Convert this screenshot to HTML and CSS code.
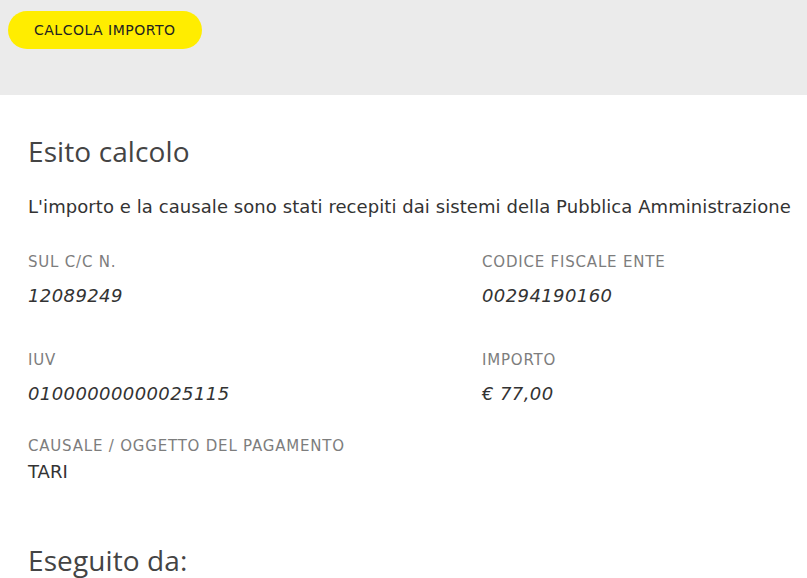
FILE: index.html
```html
<!DOCTYPE html>
<html>
  <head>
    <title>Esito calcolo</title>
    <meta name="viewport" content="width=device-width, initial-scale=1">
    <link rel="stylesheet" href="styles.css">
  </head>
  <body>
    <div class="toolbar">
      <button class="btn-yellow" type="button">CALCOLA IMPORTO</button>
    </div>
    <div class="result">
      <h2 class="title">Esito calcolo</h2>
      <p class="intro">L'importo e la causale sono stati recepiti dai sistemi della Pubblica Amministrazione</p>
      <div class="fields">
        <div class="field">
          <div class="label">SUL C/C N.</div>
          <div class="value">12089249</div>
        </div>
        <div class="field">
          <div class="label">CODICE FISCALE ENTE</div>
          <div class="value">00294190160</div>
        </div>
        <div class="field">
          <div class="label">IUV</div>
          <div class="value">01000000000025115</div>
        </div>
        <div class="field">
          <div class="label">IMPORTO</div>
          <div class="value">€ 77,00</div>
        </div>
      </div>
      <div class="field causale">
        <div class="label">CAUSALE / OGGETTO DEL PAGAMENTO</div>
        <div class="plain">TARI</div>
      </div>
      <h2 class="title next">Eseguito da:</h2>
    </div>
  </body>
</html>
```

FILE: styles.css
```css
body {
  margin: 0;
  font-family: "DejaVu Sans", sans-serif;
  color: #333;
  background: #fff;
  overflow: hidden;
}
.toolbar {
  height: 95px;
  background: #ebebeb;
  padding: 11px 8px 0;
  box-sizing: border-box;
}
.btn-yellow {
  height: 38px;
  padding: 0 26px;
  border: none;
  border-radius: 19px;
  background: #ffed00;
  color: #222;
  font-family: "DejaVu Sans", sans-serif;
  font-size: 14px;
  letter-spacing: 0.5px;
}
.result {
  padding: 38px 28px 0;
}
.title {
  margin: 0;
  font-family: "Open Sans", sans-serif;
  font-weight: 400;
  font-size: 28px;
  color: #444;
  line-height: 36px;
  letter-spacing: 0.1px;
}
.intro {
  margin: 26px 0 0;
  font-size: 18px;
  line-height: 24px;
  letter-spacing: 0.07px;
  white-space: nowrap;
}
.fields {
  display: grid;
  grid-template-columns: 454px 1fr;
  row-gap: 41px;
  margin-top: 33px;
}
.label {
  font-size: 15px;
  color: #7d7d7d;
  line-height: 20px;
  letter-spacing: 0.8px;
}
.value {
  margin-top: 11px;
  font-size: 18px;
  font-style: italic;
  line-height: 26px;
  color: #333;
  letter-spacing: 0.4px;
}
.causale {
  margin-top: 29px;
}
.plain {
  margin-top: 3px;
  font-size: 18px;
  line-height: 26px;
  color: #333;
}
.title.next {
  margin-top: 57px;
}
```
